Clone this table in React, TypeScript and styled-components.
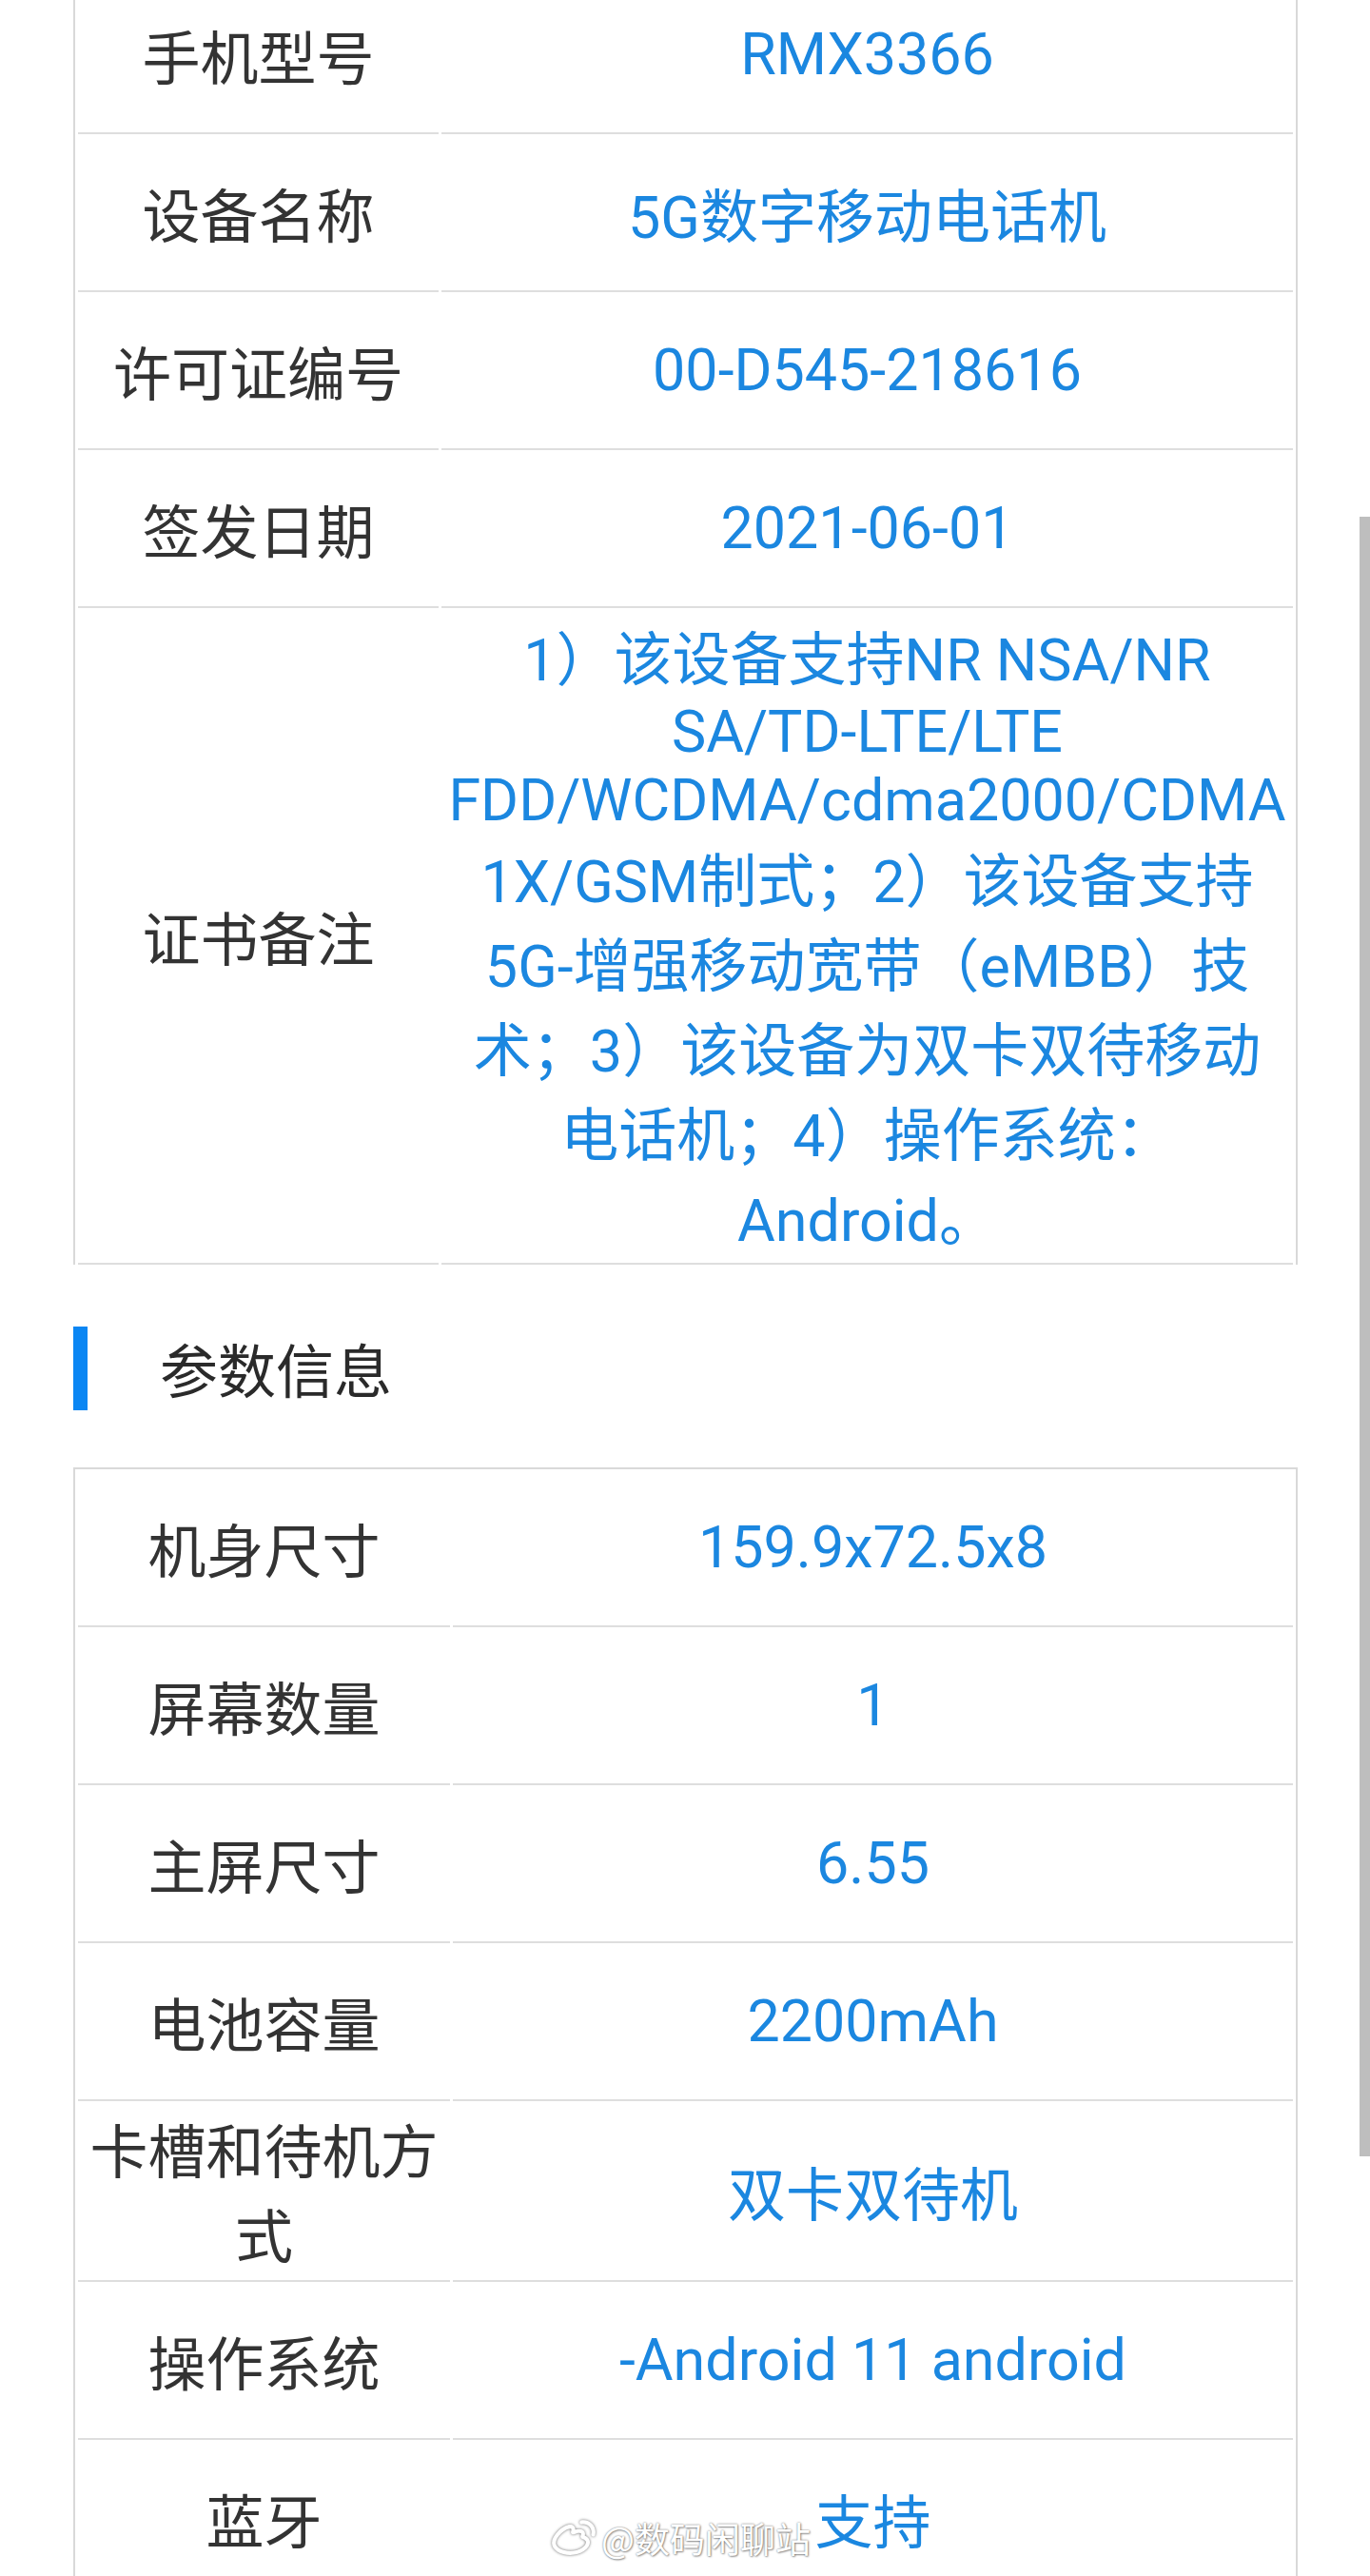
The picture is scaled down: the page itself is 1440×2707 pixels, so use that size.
import { Fragment } from "react";
import styled, { createGlobalStyle } from "styled-components";
import { RiWeiboLine } from "react-icons/ri";

//* data for the two spec tables
type SpecRow = { label: string; value: string };

const certRows: SpecRow[] = [
  { label: "手机型号", value: "RMX3366" },
  { label: "设备名称", value: "5G数字移动电话机" },
  { label: "许可证编号", value: "00-D545-218616" },
  { label: "签发日期", value: "2021-06-01" },
  {
    label: "证书备注",
    value:
      "1）该设备支持NR NSA/NR SA/TD-LTE/LTE FDD/WCDMA/cdma2000/CDMA 1X/GSM制式；2）该设备支持5G-增强移动宽带（eMBB）技术；3）该设备为双卡双待移动电话机；4）操作系统：Android。",
  },
];

const paramRows: SpecRow[] = [
  { label: "机身尺寸", value: "159.9x72.5x8" },
  { label: "屏幕数量", value: "1" },
  { label: "主屏尺寸", value: "6.55" },
  { label: "电池容量", value: "2200mAh" },
  { label: "卡槽和待机方式", value: "双卡双待机" },
  { label: "操作系统", value: "-Android 11 android" },
  { label: "蓝牙", value: "支持" },
];

/*
 * SpecTable renders label / value rows with the thin grey rules
*/
const SpecTableView = ({ rows, labelWidth, topBorder }: { rows: SpecRow[]; labelWidth: number; topBorder?: boolean }) => (
  <Table $labelWidth={labelWidth} $topBorder={topBorder}>
    {rows.map((row) => (
      <Fragment key={row.label}>
        <LabelCell>{row.label}</LabelCell>
        <ValueCell>{row.value}</ValueCell>
      </Fragment>
    ))}
  </Table>
);

const App = (): JSX.Element => {
  return (
    <>
      <GlobalStyle />
      <Screen>
        <Content>
          <SpecTableView rows={certRows} labelWidth={379} />
          <SectionHeader>
            <SectionBar />
            <SectionTitle>参数信息</SectionTitle>
          </SectionHeader>
          <SpecTableView rows={paramRows} labelWidth={391} topBorder />
        </Content>

        {/* weibo watermark over the screenshot */}
        <Watermark>
          <RiWeiboLine size={50} />
          <span>@数码闲聊站</span>
        </Watermark>
        <ScrollThumb />
      </Screen>
    </>
  );
};

export default App;

//lines below this point are styled-components logic

const GlobalStyle = createGlobalStyle`
  html, body {
    margin: 0;
    padding: 0;
    background: #ffffff;
    overflow: hidden;
  }
`;

/*
 * Screen is the phone viewport, content is scrolled a little past the top
*/
const Screen = styled.div`
  position: relative;
  height: 100vh;
  overflow: hidden;
  background: #ffffff;
`;

const Content = styled.div`
  margin-top: -25px;
  margin-left: 77px;
  width: 1287px;
`;

const Table = styled.div<{ $labelWidth: number; $topBorder?: boolean }>`
  display: grid;
  grid-template-columns: ${(p) => p.$labelWidth}px 1fr;
  column-gap: 3px;
  padding: 0 3px;
  border-left: 2px solid #d9d9d9;
  border-right: 2px solid #d9d9d9;
  border-top: ${(p) => (p.$topBorder ? "2px solid #d9d9d9" : "none")};
`;

const Cell = styled.div`
  display: flex;
  align-items: center;
  justify-content: center;
  text-align: center;
  box-sizing: border-box;
  min-height: 166px;
  padding: 5px 6px;
  border-bottom: 2px solid #dedede;
  font-size: 61px;
  line-height: normal;
`;

const LabelCell = styled(Cell)`
  color: #333333;
  font-family: "Noto Sans CJK SC", sans-serif;
`;

const ValueCell = styled(Cell)`
  color: #1b87e0;
  font-family: Roboto, "Noto Sans CJK SC", sans-serif;
`;

const SectionHeader = styled.div`
  display: flex;
  align-items: center;
  margin: 64px 0 60px;
`;

const SectionBar = styled.div`
  width: 15px;
  height: 88px;
  background: #0b86f3;
`;

const SectionTitle = styled.h2`
  margin: 0 0 0 76px;
  color: #2a2a2a;
  font-family: "Noto Sans CJK SC", sans-serif;
  font-size: 61px;
  font-weight: 400;
`;

const Watermark = styled.div`
  position: absolute;
  left: 578px;
  top: 2640px;
  display: flex;
  align-items: center;
  gap: 4px;
  color: #ffffff;
  font-family: "Noto Sans CJK SC", sans-serif;
  font-size: 37px;
  text-shadow: 0 0 2px rgba(0, 0, 0, 0.55), 1px 1px 2px rgba(0, 0, 0, 0.35);

  svg {
    filter: drop-shadow(0 0 1.5px rgba(0, 0, 0, 0.6));
  }
`;

const ScrollThumb = styled.div`
  position: absolute;
  right: 0;
  top: 543px;
  width: 11px;
  height: 1723px;
  background: #bebebe;
`;
